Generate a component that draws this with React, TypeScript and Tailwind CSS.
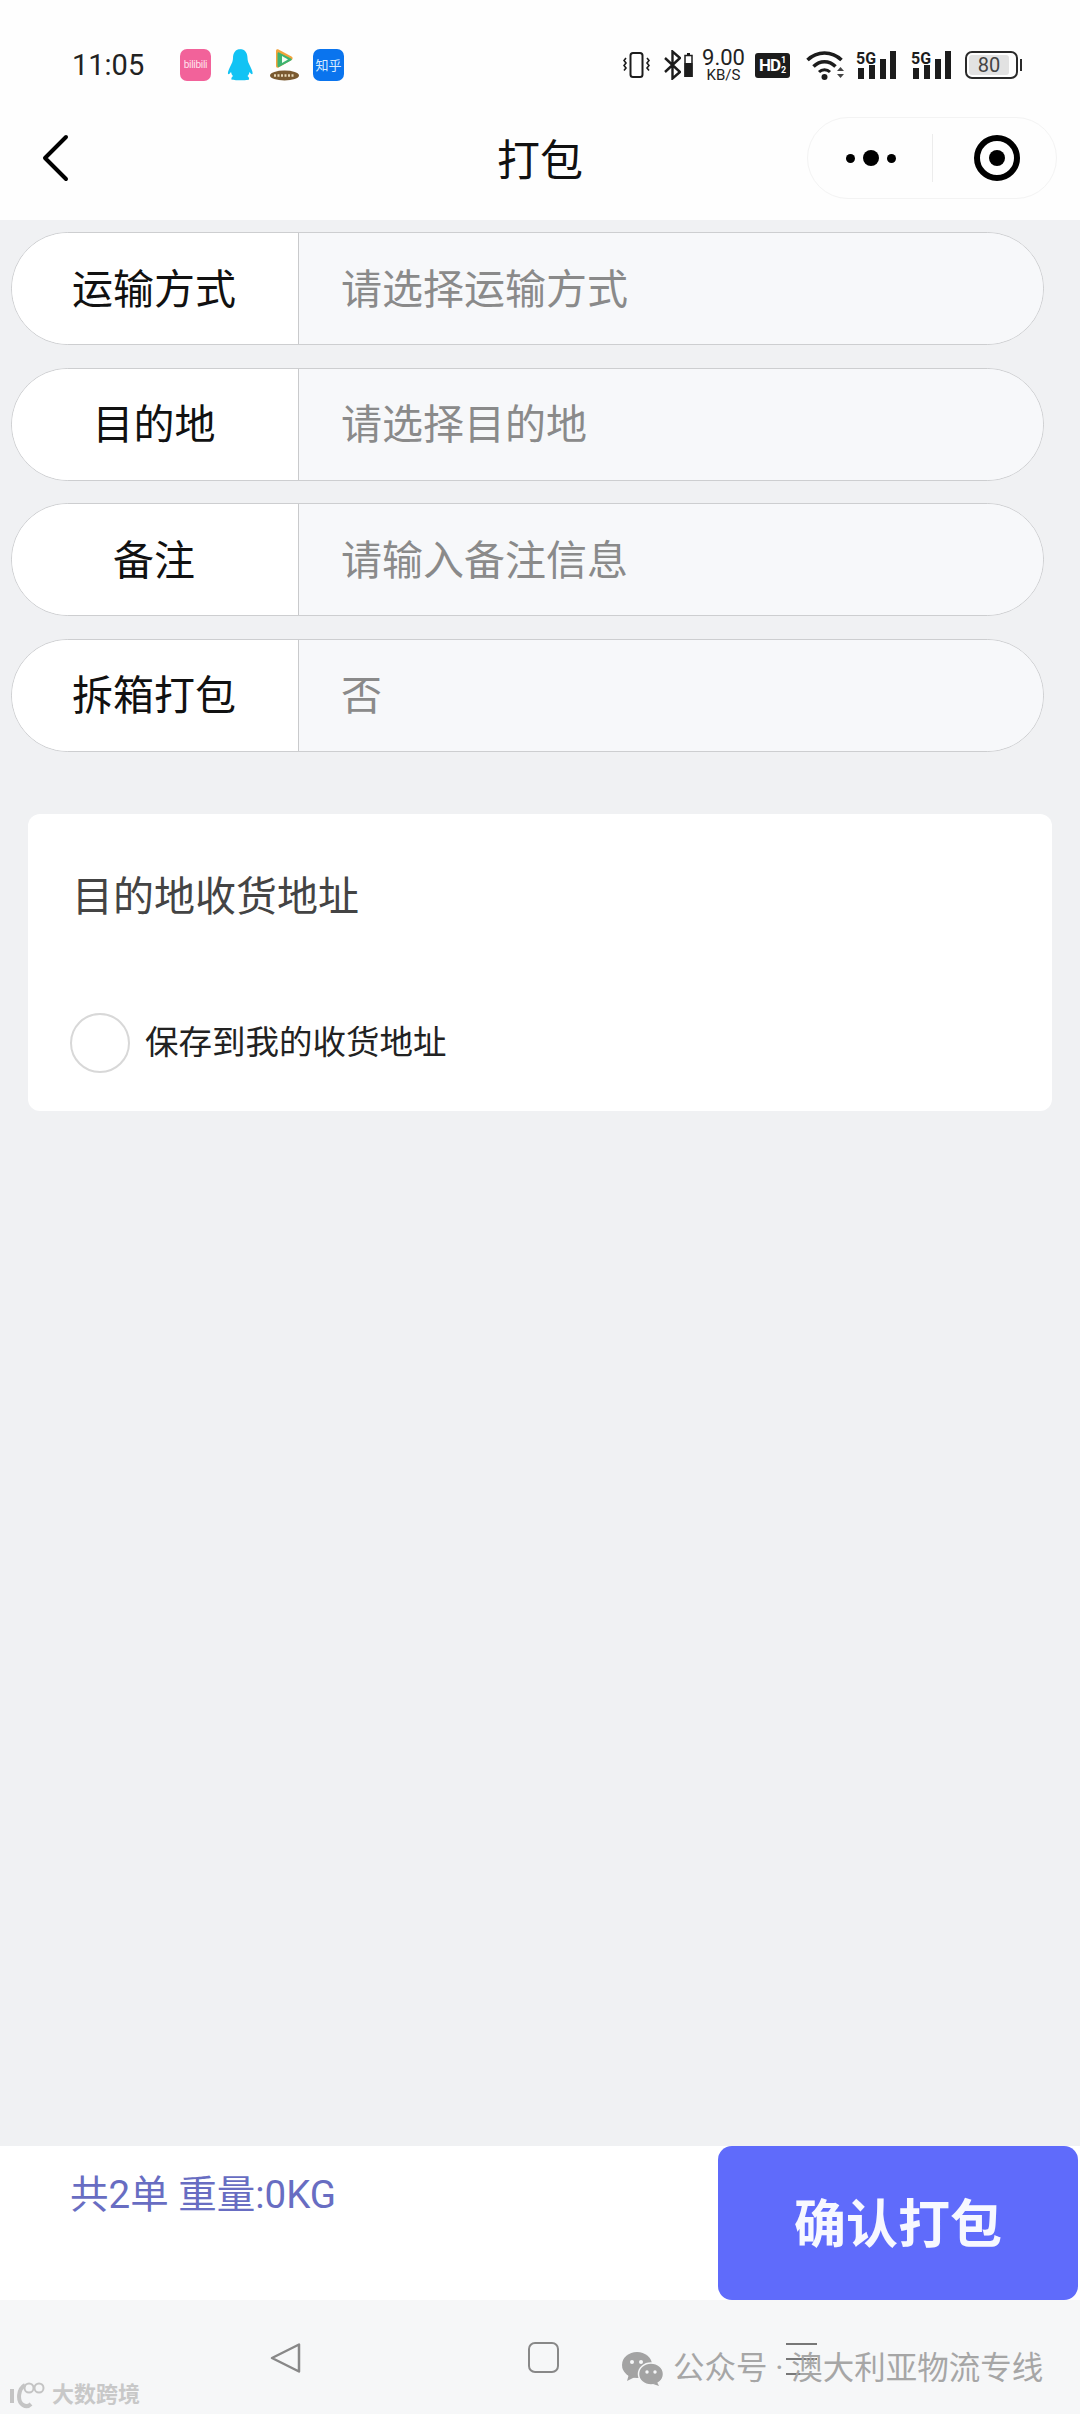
const cjk = "font-['Roboto','Noto_Sans_CJK_SC',sans-serif]";

const rows = [
  { label: '运输方式', value: '请选择运输方式' },
  { label: '目的地', value: '请选择目的地' },
  { label: '备注', value: '请输入备注信息' },
  { label: '拆箱打包', value: '否' },
];

function Signal() {
  return (
    <svg width="40" height="32" viewBox="0 0 40 32" className="ml-[15px]">
      <text x="0" y="15" fontFamily="Roboto" fontWeight="700" fontSize="17" textLength="20" lengthAdjust="spacingAndGlyphs" fill="#1c1c1c">5G</text>
      <rect x="2" y="19" width="6" height="11" fill="#1c1c1c" />
      <rect x="13" y="16" width="6" height="14" fill="#1c1c1c" />
      <rect x="24" y="10" width="6" height="20" fill="#1c1c1c" />
      <rect x="34" y="2" width="6" height="28" fill="#1c1c1c" />
    </svg>
  );
}

function StatusBar() {
  return (
    <div className="flex h-[116px] items-center pt-[14px] pl-[72px]">
      <span className="w-[73px] font-['Roboto',sans-serif] text-[29px] leading-none text-[#222]">11:05</span>
      {/* app notifications */}
      <div className="ml-[35px] flex h-[32px] w-[31px] items-center justify-center rounded-[7px] bg-[#f2629a]">
        <span className="font-['Roboto',sans-serif] text-[10px] leading-none tracking-[-0.3px] text-[#ffe3ee]">bilibili</span>
      </div>
      <svg width="26" height="32" viewBox="0 0 26 32" className="ml-[16px]">
        <path d="M13 0c5 0 7.500 4 7.500 9 0 3 1 5 3 9 1.500 3 2.500 6 2 7-1 .500-2-.500-3-2-.500 2-1 3-2 4 1 1 2 2 1.500 3.500-.500 1-16.500 1-17.500 0-.500-1.500.500-2.500 1.500-3.500-1-1-1.500-2-2-4-1 1.500-2 2.500-3 2-.500-1 .500-4 2-7 2-4 3-6 3-9 0-5 2.500-9 7.500-9z" fill="#12c3f4" />
      </svg>
      <svg width="29" height="32" viewBox="0 0 29 32" className="ml-[17px]">
        <path d="M6 2c0-1.500 1-2 2.500-1.500l13 7c1.500 1 1.500 2.500 0 3.500l-13 7.500C7 19 6 18.500 6 17z" fill="#f2a33a" />
        <path d="M9 3.500l12 6c1 .500 1 1.500 0 2l-12 6.500c-1 .500-1.500 0-1.500-1V5c0-1 .500-2 1.500-1.500z" fill="#3cb371" />
        <path d="M12 7l6 3.500-6 3.500z" fill="#f4fff4" />
        <ellipse cx="14.500" cy="26.500" rx="14.500" ry="5" fill="#7a5a30" />
        <path d="M4 26.500h21" stroke="#e8d9b8" strokeWidth="2.500" strokeDasharray="2 1.500" />
      </svg>
      <div className="ml-[14px] flex h-[32px] w-[31px] items-center justify-center rounded-[7px] bg-[#0a74ee]">
        <span className={`${cjk} text-[13px] leading-none text-[#d8ecff]`}>知乎</span>
      </div>

      {/* system icons */}
      <svg width="27" height="26" viewBox="0 0 27 26" fill="none" stroke="#1c1c1c" className="ml-[279px]">
        <rect x="7.500" y="1" width="12" height="24" rx="2.500" strokeWidth="2" />
        <path d="M3 6l-2 2.500 2 2.500-2 2.500 2 2.500-2 2.500M24 6l2 2.500-2 2.500 2 2.500-2 2.500 2 2.500" strokeWidth="1.600" />
      </svg>
      <svg width="17" height="30" viewBox="0 0 17 30" fill="none" stroke="#1c1c1c" strokeWidth="2.400" className="ml-[14px]">
        <path d="M1 8l15 14-7.500 6.500V1.500L16 8 1 22" />
      </svg>
      <svg width="9" height="24" viewBox="0 0 9 24" className="ml-[3px]">
        <rect x="3" y="0" width="3" height="2" fill="#1c1c1c" />
        <rect x="1" y="2.500" width="7" height="21" fill="none" stroke="#1c1c1c" strokeWidth="1.500" />
        <rect x="0.500" y="10" width="8" height="14" fill="#1c1c1c" />
      </svg>
      <div className="ml-[8px] flex w-[45px] flex-col items-center font-['Roboto',sans-serif] text-[#222]">
        <span className="text-[22px] leading-[20px]">9.00</span>
        <span className="text-[15px] leading-[14px]">KB/S</span>
      </div>
      <div className="ml-[9px] flex h-[25px] w-[35px] items-center justify-center gap-[1px] rounded-[3px] bg-[#1c1c1c] font-['Roboto',sans-serif] font-bold text-white">
        <span className="text-[17px] leading-none tracking-[-1px]">HD</span>
        <span className="flex flex-col text-[9px] leading-[10px]">
          <span>1</span>
          <span>2</span>
        </span>
      </div>
      <svg width="39" height="30" viewBox="0 0 39 30" fill="none" stroke="#1c1c1c" className="ml-[16px]">
        <path d="M1.500 10C11 0.500 26 0.500 35.500 10" strokeWidth="3.500" />
        <path d="M7.500 16.500C14 10 23 10 29.500 16.500" strokeWidth="3.500" />
        <path d="M13 22c3-3 8-3 11 0" strokeWidth="3" />
        <circle cx="18.500" cy="27" r="3" fill="#1c1c1c" stroke="none" />
        <path d="M31 21l3.500-4 3.500 4zM31 24l3.500 4 3.500-4z" fill="#444" stroke="none" />
      </svg>
      <div className="ml-[-4px] flex">
        <Signal />
        <Signal />
      </div>
      <div className="ml-[14px] flex items-center">
        <div className="flex h-[28px] w-[53px] items-center rounded-[7px] border-2 border-[#2a2a2a] p-[2px]">
          <div className="flex h-full w-[40px] items-center justify-center rounded-[3px] bg-[#e2e2e2] font-['Roboto',sans-serif] text-[20px] leading-none text-[#444]">80</div>
        </div>
        <div className="ml-[2px] h-[12px] w-[2px] bg-[#2a2a2a]" />
      </div>
    </div>
  );
}

function TitleBar() {
  return (
    <div className="grid h-[84px] grid-cols-[1fr_auto_1fr] items-center">
      <svg width="28" height="48" viewBox="0 0 28 48" fill="none" stroke="#000" strokeWidth="4" strokeLinecap="round" strokeLinejoin="round" className="ml-[41px]">
        <path d="M25 3L4 24l21 21" />
      </svg>
      <h1 className={`${cjk} pt-[7px] text-[43px] font-normal leading-none text-[#111]`}>打包</h1>
      <div className="ml-auto mr-[23px] flex h-[82px] w-[250px] items-center rounded-full border border-[#f3f3f3]">
        <div className="flex w-[124px] items-center justify-center gap-[8px] pl-[2px]">
          <span className="size-[9px] rounded-full bg-black" />
          <span className="size-[16px] rounded-full bg-black" />
          <span className="size-[9px] rounded-full bg-black" />
        </div>
        <div className="h-[48px] w-px bg-[#ececec]" />
        <div className="ml-[41px] flex size-[46px] items-center justify-center rounded-full border-[6px] border-black">
          <span className="size-[16px] rounded-full bg-black" />
        </div>
      </div>
    </div>
  );
}

function FormRow({ label, value }: { label: string; value: string }) {
  return (
    <div className="flex h-[113px] overflow-hidden rounded-full border-[1.500px] border-[#cdced0]">
      <div className="flex w-[287px] items-center justify-center border-r-[1.500px] border-[#c9cacc] bg-white pr-[2px] pt-[3px] text-[41px] leading-none text-[#111]">
        {label}
      </div>
      <div className="flex flex-1 items-center bg-[#f7f8fa] pl-[42px] pt-[3px] text-[41px] leading-none text-[#8a8a8a]">
        {value}
      </div>
    </div>
  );
}

export default function App() {
  return (
    <div className={`${cjk} relative flex h-[2414px] w-[1080px] flex-col overflow-hidden bg-[#f0f1f3]`}>
      <header className="h-[220px] bg-[#fefefe]">
        <StatusBar />
        <TitleBar />
      </header>

      <main className="flex-1">
        <div className="flex flex-col gap-[22.500px] pl-[11px] pr-[36px] pt-[12px]">
          {rows.map((row) => (
            <FormRow key={row.label} label={row.label} value={row.value} />
          ))}
        </div>

        <section className="mx-[28px] mt-[62px] h-[297px] rounded-[12px] bg-white">
          <h2 className="pl-[44px] pt-[61px] text-[41px] font-normal leading-[44px] text-[#444]">目的地收货地址</h2>
          <div className="mt-[94px] flex items-center pl-[42px]">
            <span className="size-[60px] rounded-full border-2 border-[#d8d8d8]" />
            <span className="ml-[15px] text-[33.500px] leading-none text-[#222]">保存到我的收货地址</span>
          </div>
        </section>
      </main>

      {/* bottom action bar */}
      <footer className="flex h-[154px] bg-white">
        <div className="flex-1 pl-[70px] pt-[29px] text-[38.500px] leading-[40px] text-[#686dc2]">共2单 重量:0KG</div>
        <button className="mr-[2px] flex w-[360px] items-center justify-center rounded-[14px] bg-[#5f6bfb] pt-[5px] text-[52px] font-bold leading-none text-[#f7f8ff]">
          确认打包
        </button>
      </footer>

      {/* android nav bar */}
      <nav className="relative flex h-[114px] items-start bg-[#f6f7f8] pt-[42px]">
        <svg width="32" height="32" viewBox="0 0 32 32" fill="none" stroke="#888" strokeWidth="2.500" strokeLinejoin="round" className="ml-[270px]">
          <path d="M2 16L29 2.500v27z" />
        </svg>
        <div className="ml-[226px] size-[31px] rounded-[7px] border-[2.500px] border-[#888]" />
        <div className="ml-[227px] flex w-[31px] flex-col gap-[13px] pt-[1px]">
          <span className="h-[2px] bg-[#777]" />
          <span className="h-[2px] bg-[#777]" />
          <span className="h-[2px] bg-[#777]" />
        </div>

        {/* watermarks over the nav bar */}
        <div className="absolute left-[622px] top-[52px] flex items-center">
          <svg width="42" height="34" viewBox="0 0 42 34">
            <ellipse cx="15" cy="13" rx="15" ry="13" fill="#a3a3a3" />
            <path d="M7 22l-2 7 8-4z" fill="#a3a3a3" />
            <ellipse cx="29" cy="22" rx="12.500" ry="11" fill="#a3a3a3" stroke="#f6f7f8" strokeWidth="1.500" />
            <path d="M35 30l2 4-6-2z" fill="#a3a3a3" />
            <circle cx="10" cy="10" r="2" fill="#f6f7f8" />
            <circle cx="19" cy="10" r="2" fill="#f6f7f8" />
            <circle cx="25" cy="20" r="1.700" fill="#f6f7f8" />
            <circle cx="33" cy="20" r="1.700" fill="#f6f7f8" />
          </svg>
          <span className="ml-[9px] whitespace-nowrap text-[31.500px] leading-none text-[#a6a6a6]">公众号 · 澳大利亚物流专线</span>
        </div>
        <div className="absolute left-[9px] top-[81px] flex items-center">
          <svg width="38" height="28" viewBox="0 0 38 28" fill="none" stroke="#c4c4c4">
            <path d="M3 8v14" strokeWidth="4" />
            <path d="M16 4C9 8 8 20 14 24c3 2 6 1 8-1" strokeWidth="4" />
            <circle cx="20" cy="7" r="4.500" strokeWidth="2" />
            <circle cx="30" cy="7" r="4.500" strokeWidth="2" />
          </svg>
          <span className="ml-[5px] text-[22px] font-bold leading-none text-[#c8c8c8]">大数跨境</span>
        </div>
      </nav>
    </div>
  );
}
